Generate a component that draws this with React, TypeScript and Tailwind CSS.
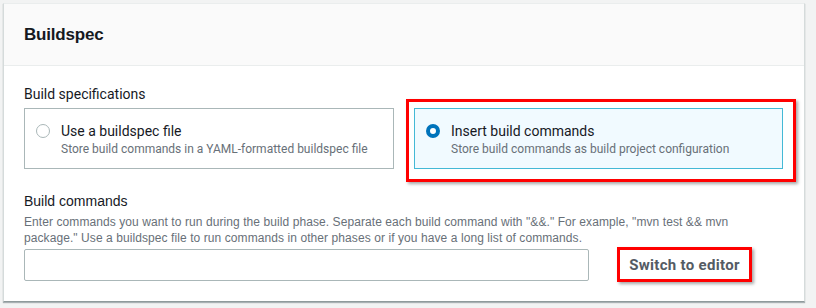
import { useState } from "react";

const sans = "font-['Roboto','Liberation_Sans',sans-serif]";
const narrow = "font-['Liberation_Sans','Roboto',sans-serif]";

type Option = { id: string; title: string; desc: string };

const options: Option[] = [
  { id: "file", title: "Use a buildspec file", desc: "Store build commands in a YAML-formatted buildspec file" },
  { id: "insert", title: "Insert build commands", desc: "Store build commands as build project configuration" },
];

const Radio = ({ checked }: { checked: boolean }) =>
  checked ? (
    <span className="mt-[3px] h-[14px] w-[14px] shrink-0 rounded-full border-[4px] border-[#0073bb] bg-white" />
  ) : (
    <span className="mt-[3px] h-[14px] w-[14px] shrink-0 rounded-full border border-[#aab7b8] bg-white" />
  );

const Tile = ({ opt, checked, onPick }: { opt: Option; checked: boolean; onPick: () => void }) => (
  <button
    type="button"
    onClick={onPick}
    className={`flex h-[61px] w-full items-start gap-[11px] border px-[11px] pt-[12px] text-left ${
      checked ? "border-[#44b9d6] bg-[#f1faff]" : "border-[#aab7b8] bg-white"
    }`}
  >
    <Radio checked={checked} />
    <div className="flex flex-col">
      <span className={`${sans} text-[14px] leading-[20px] text-[#16191f]`}>{opt.title}</span>
      <span className={`${sans} text-[12px] leading-[16px] text-[#687078]`}>{opt.desc}</span>
    </div>
  </button>
);

export default function App() {
  const [mode, setMode] = useState("insert");

  return (
    <div className="h-[308px] w-[816px] overflow-hidden bg-[#f2f3f3] pl-[3px] pt-[3px]">
      <div className="w-[802px] border border-t-[#eaeded] border-x-[#d5dbdb] border-b-[#8f9a9b] bg-white shadow-[0_1px_1px_rgba(0,28,36,0.3)]">
        <div className="flex h-[62px] items-center border-b border-[#eaeded] bg-[#fafafa] px-[20px]">
          <h2 className={`${narrow} text-[17px] font-bold leading-[22px] tracking-[-0.2px] text-[#16191f]`}>Buildspec</h2>
        </div>

        <div className="px-[20px] pb-[19px] pt-[18px]">
          <div className={`${sans} text-[14px] leading-[20px] text-[#16191f]`}>Build specifications</div>

          <div className="mt-[4px] grid grid-cols-[370px_369px] gap-[20px]">
            {options.map((opt) => (
              <div key={opt.id} className="relative">
                <Tile opt={opt} checked={mode === opt.id} onPick={() => setMode(opt.id)} />
                {opt.id === "insert" && (
                  <span className="pointer-events-none absolute -bottom-[13px] -left-[8px] -right-[13px] -top-[9px] border-[3px] border-[#ff0000] shadow-[2px_2px_3px_rgba(0,0,0,0.35)]" />
                )}
              </div>
            ))}
          </div>

          <div className={`${narrow} mt-[22px] text-[14px] leading-[20px] text-[#16191f]`}>Build commands</div>
          <p className={`${narrow} mt-[3px] text-[12px] leading-[16px] tracking-[0.08px] text-[#687078]`}>
            Enter commands you want to run during the build phase. Separate each build command with "&&." For example, "mvn test && mvn
            <br />
            package." Use a buildspec file to run commands in other phases or if you have a long list of commands.
          </p>

          <div className="mt-[1px] flex items-center">
            <input
              type="text"
              className="h-[32px] w-[565px] rounded-[2px] border border-[#aab7b8] bg-white px-2 text-[14px] outline-none"
            />
            <button
              type="button"
              className={`${sans} ml-[28px] h-[35px] w-[135px] border-[3px] border-[#ff0000] bg-white pt-[1px] text-[15px] font-bold tracking-[0.3px] text-[#545b64] shadow-[2px_2px_3px_rgba(0,0,0,0.35)]`}
            >
              Switch to editor
            </button>
          </div>
        </div>
      </div>
    </div>
  );
}
